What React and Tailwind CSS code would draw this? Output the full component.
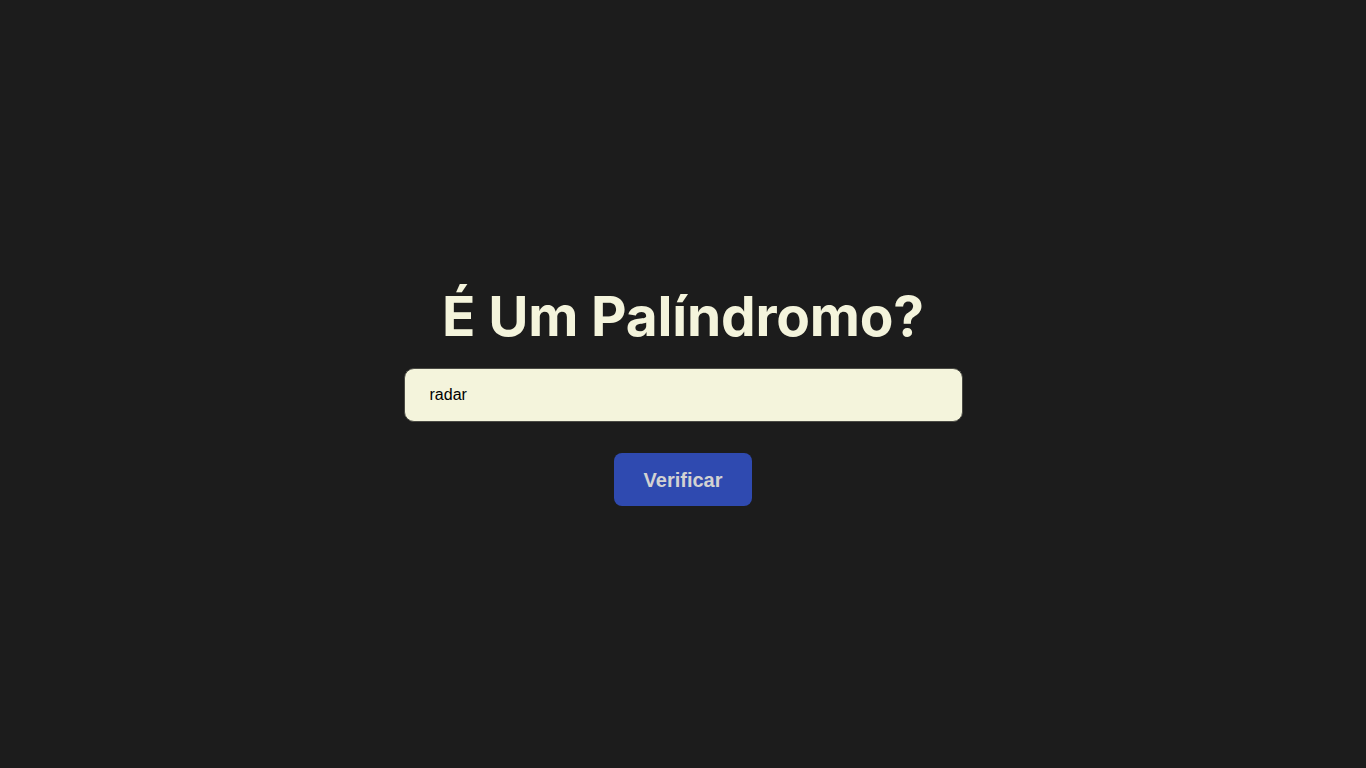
import { useState } from 'react';

export default function App() {
  const [text, setText] = useState('radar');

  return (
    <div className="min-h-screen w-full bg-[#1c1c1c] flex flex-col items-center pt-[282px]">
      <h1 className="font-['Inter',sans-serif] font-bold text-[55px] leading-[68px] text-[#f4f4dc] tracking-[-0.2px]">
        É Um Palíndromo?
      </h1>
      <input
        autoFocus
        value={text}
        onChange={(e) => setText(e.target.value)}
        className="mt-[18px] w-[559px] h-[54px] rounded-[10px] border border-[#4a4a44] bg-[#f4f4dc] pl-[25px] font-['Liberation_Sans',Arial,sans-serif] text-[16px] text-black caret-black outline-none"
      />
      <button className="mt-[31px] w-[138px] h-[53px] rounded-[8px] bg-[#2f4ab0] font-['Liberation_Sans',Arial,sans-serif] font-bold text-[20px] text-[#d2d2d2] cursor-pointer">
        Verificar
      </button>
    </div>
  );
}
